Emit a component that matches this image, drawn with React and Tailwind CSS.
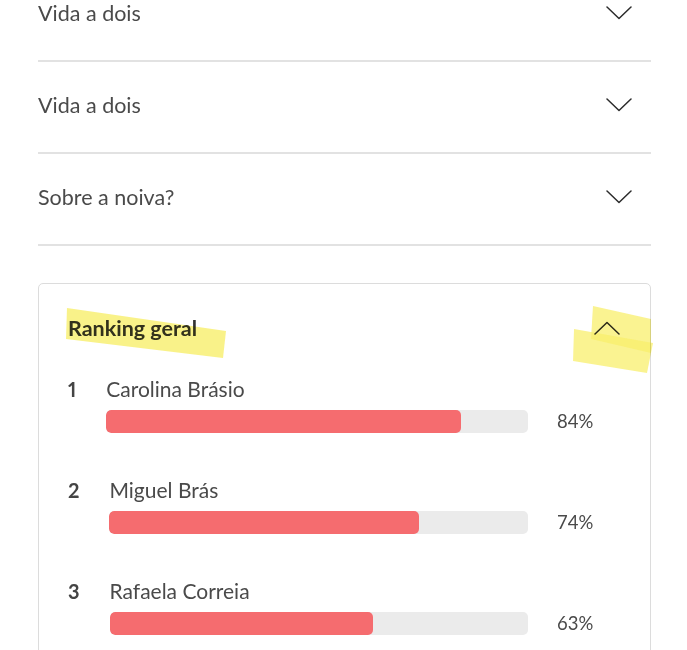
import React from 'react';

const font = { fontFamily: 'Lato, "Open Sans", sans-serif' };

const questions = ['Vida a dois', 'Vida a dois', 'Sobre a noiva?'];

const ranking = [
  { pos: 1, name: 'Carolina Brásio', pct: 84 },
  { pos: 2, name: 'Miguel Brás', pct: 74 },
  { pos: 3, name: 'Rafaela Correia', pct: 63 },
];

function Chevron({ up = false }) {
  return (
    <svg width="26" height="14" viewBox="0 0 26 14" fill="none" className="shrink-0">
      <path
        d={up ? 'M1 13 L13 1.5 L25 13' : 'M1 1 L13 12.5 L25 1'}
        stroke="#2b2b2b"
        strokeWidth="1.5"
        strokeLinecap="round"
        strokeLinejoin="round"
      />
    </svg>
  );
}

function QuestionRow({ label }) {
  return (
    <div className="flex h-[92px] items-center justify-between border-b-2 border-[#e2e2e2] pb-[4px] pr-[19px]">
      <span className="text-[21.5px] leading-[24px] text-[#4a4a4a]">{label}</span>
      <Chevron />
    </div>
  );
}

function RankItem({ pos, name, pct }) {
  return (
    <div className="flex gap-[30px]">
      <span className="text-[20px] font-bold leading-[24px] text-[#444] proportional-nums">{pos}</span>
      <div className="flex-1">
        <div className="text-[21px] leading-[24px] text-[#4a4a4a]">{name}</div>
        <div className="mt-[9px] flex items-center">
          <div className="h-[23px] flex-1 overflow-hidden rounded-[5px] bg-[#ebebeb]">
            <div className="h-full rounded-[5px] bg-[#f56c6f]" style={{ width: `${pct}%` }} />
          </div>
          <span className="ml-[29px] w-[58px] text-[18.5px] leading-[23px] text-[#4a4a4a]">{pct}%</span>
        </div>
      </div>
    </div>
  );
}

export default function App() {
  return (
    <div className="min-h-screen overflow-hidden bg-white" style={font}>
      <div className="-mt-[30px] ml-[38px] mr-[36px]">
        {questions.map((q, i) => (
          <QuestionRow key={i} label={q} />
        ))}

        {/* Ranking card */}
        <div className="relative mt-[37px] rounded-[5px] border border-[#dcdcdc] pb-[40px] pl-[29px] pr-[35px]">
          <div className="flex items-center justify-between pt-[32px]">
            <span className="text-[21.5px] font-bold leading-[24px] text-[#333]">Ranking geral</span>
            <span className="-mr-[5px]">
              <Chevron up />
            </span>
          </div>

          <div className="mt-[37px] flex flex-col gap-[45px]">
            {ranking.map((r) => (
              <RankItem key={r.pos} {...r} />
            ))}
          </div>

          {/* highlighter strokes over the header */}
          <svg
            className="pointer-events-none absolute left-0 top-0 mix-blend-multiply"
            width="620"
            height="100"
            viewBox="0 0 620 100"
          >
            <polygon points="28,24 187,47 184,74 27,55" fill="#f8ef6c" opacity="0.8" />
            <polygon points="554,22 612,35 612,69 552,55" fill="#f8ef6c" opacity="0.75" />
            <polygon points="535,45 614,59 608,89 534,77" fill="#f8ef6c" opacity="0.75" />
          </svg>
        </div>
      </div>
    </div>
  );
}
